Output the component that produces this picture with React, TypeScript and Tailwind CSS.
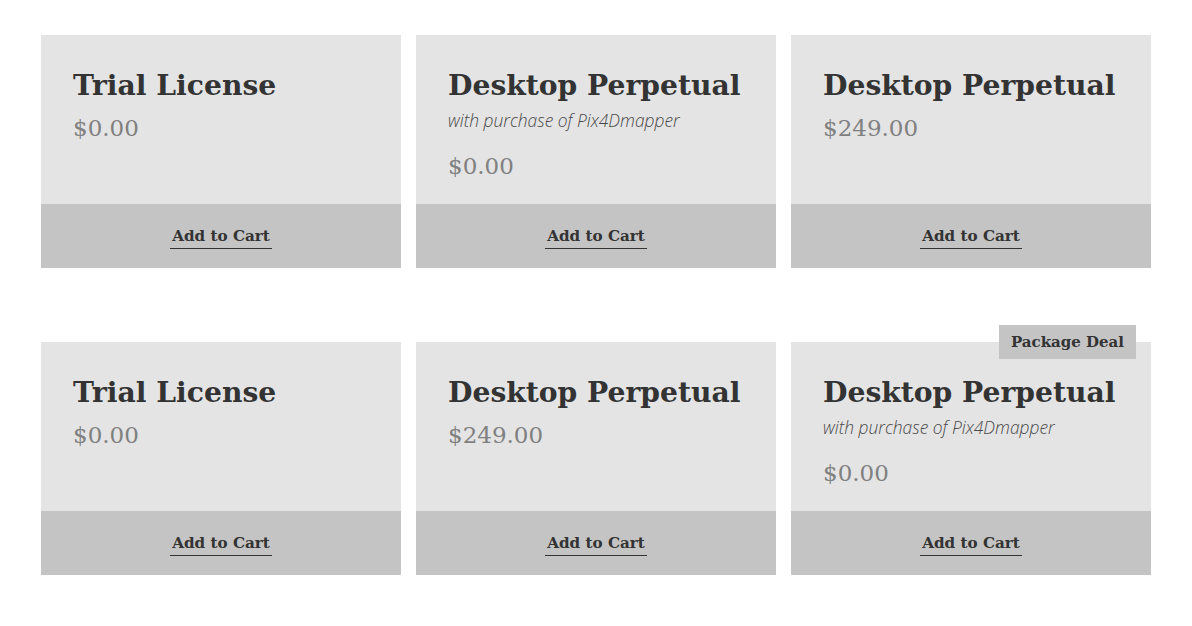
type Product = {
  title: string;
  note?: string;
  price: string;
  badge?: string;
};

const rows: Product[][] = [
  [
    { title: "Trial License", price: "$0.00" },
    { title: "Desktop Perpetual", note: "with purchase of Pix4Dmapper", price: "$0.00" },
    { title: "Desktop Perpetual", price: "$249.00" },
  ],
  [
    { title: "Trial License", price: "$0.00" },
    { title: "Desktop Perpetual", price: "$249.00" },
    {
      title: "Desktop Perpetual",
      note: "with purchase of Pix4Dmapper",
      price: "$0.00",
      badge: "Package Deal",
    },
  ],
];

function Card({ p }: { p: Product }) {
  return (
    <div className="relative flex h-[233px] flex-col bg-[#e4e4e4]">
      {p.badge && (
        <span className="absolute -top-[17px] right-[15px] flex h-[34px] items-center bg-[#c4c4c4] px-[12px] text-[15px] font-bold text-[#333]">
          {p.badge}
        </span>
      )}
      <div className="flex-1 px-[32px] pt-[33px]">
        <h2 className="text-[28.2px] leading-[36px] font-bold text-[#333]">{p.title}</h2>
        {p.note && (
          <p className="mt-[4px] font-['Open_Sans'] text-[17.4px] leading-[24px] font-light italic text-[#4a4a4a]">
            {p.note}
          </p>
        )}
        <p className={`${p.note ? "mt-[20px]" : "mt-[10px]"} text-[23px] leading-[28px] text-[#808080]`}>
          {p.price}
        </p>
      </div>
      <div className="flex h-[64px] items-center justify-center bg-[#c4c4c4]">
        <a className="mt-[2px] border-b-[1.5px] border-[#333] px-[2px] pb-[2px] text-[15.2px] font-bold leading-[20px] text-[#333]">
          Add to Cart
        </a>
      </div>
    </div>
  );
}

export default function App() {
  return (
    <div className="min-h-[626px] bg-white px-[41px] pt-[35px] font-['DejaVu_Serif',serif]">
      <div className="flex flex-col gap-[74px]">
        {rows.map((row, i) => (
          <div key={i} className="grid grid-cols-3 gap-[15px]">
            {row.map((p, j) => (
              <Card key={j} p={p} />
            ))}
          </div>
        ))}
      </div>
    </div>
  );
}
